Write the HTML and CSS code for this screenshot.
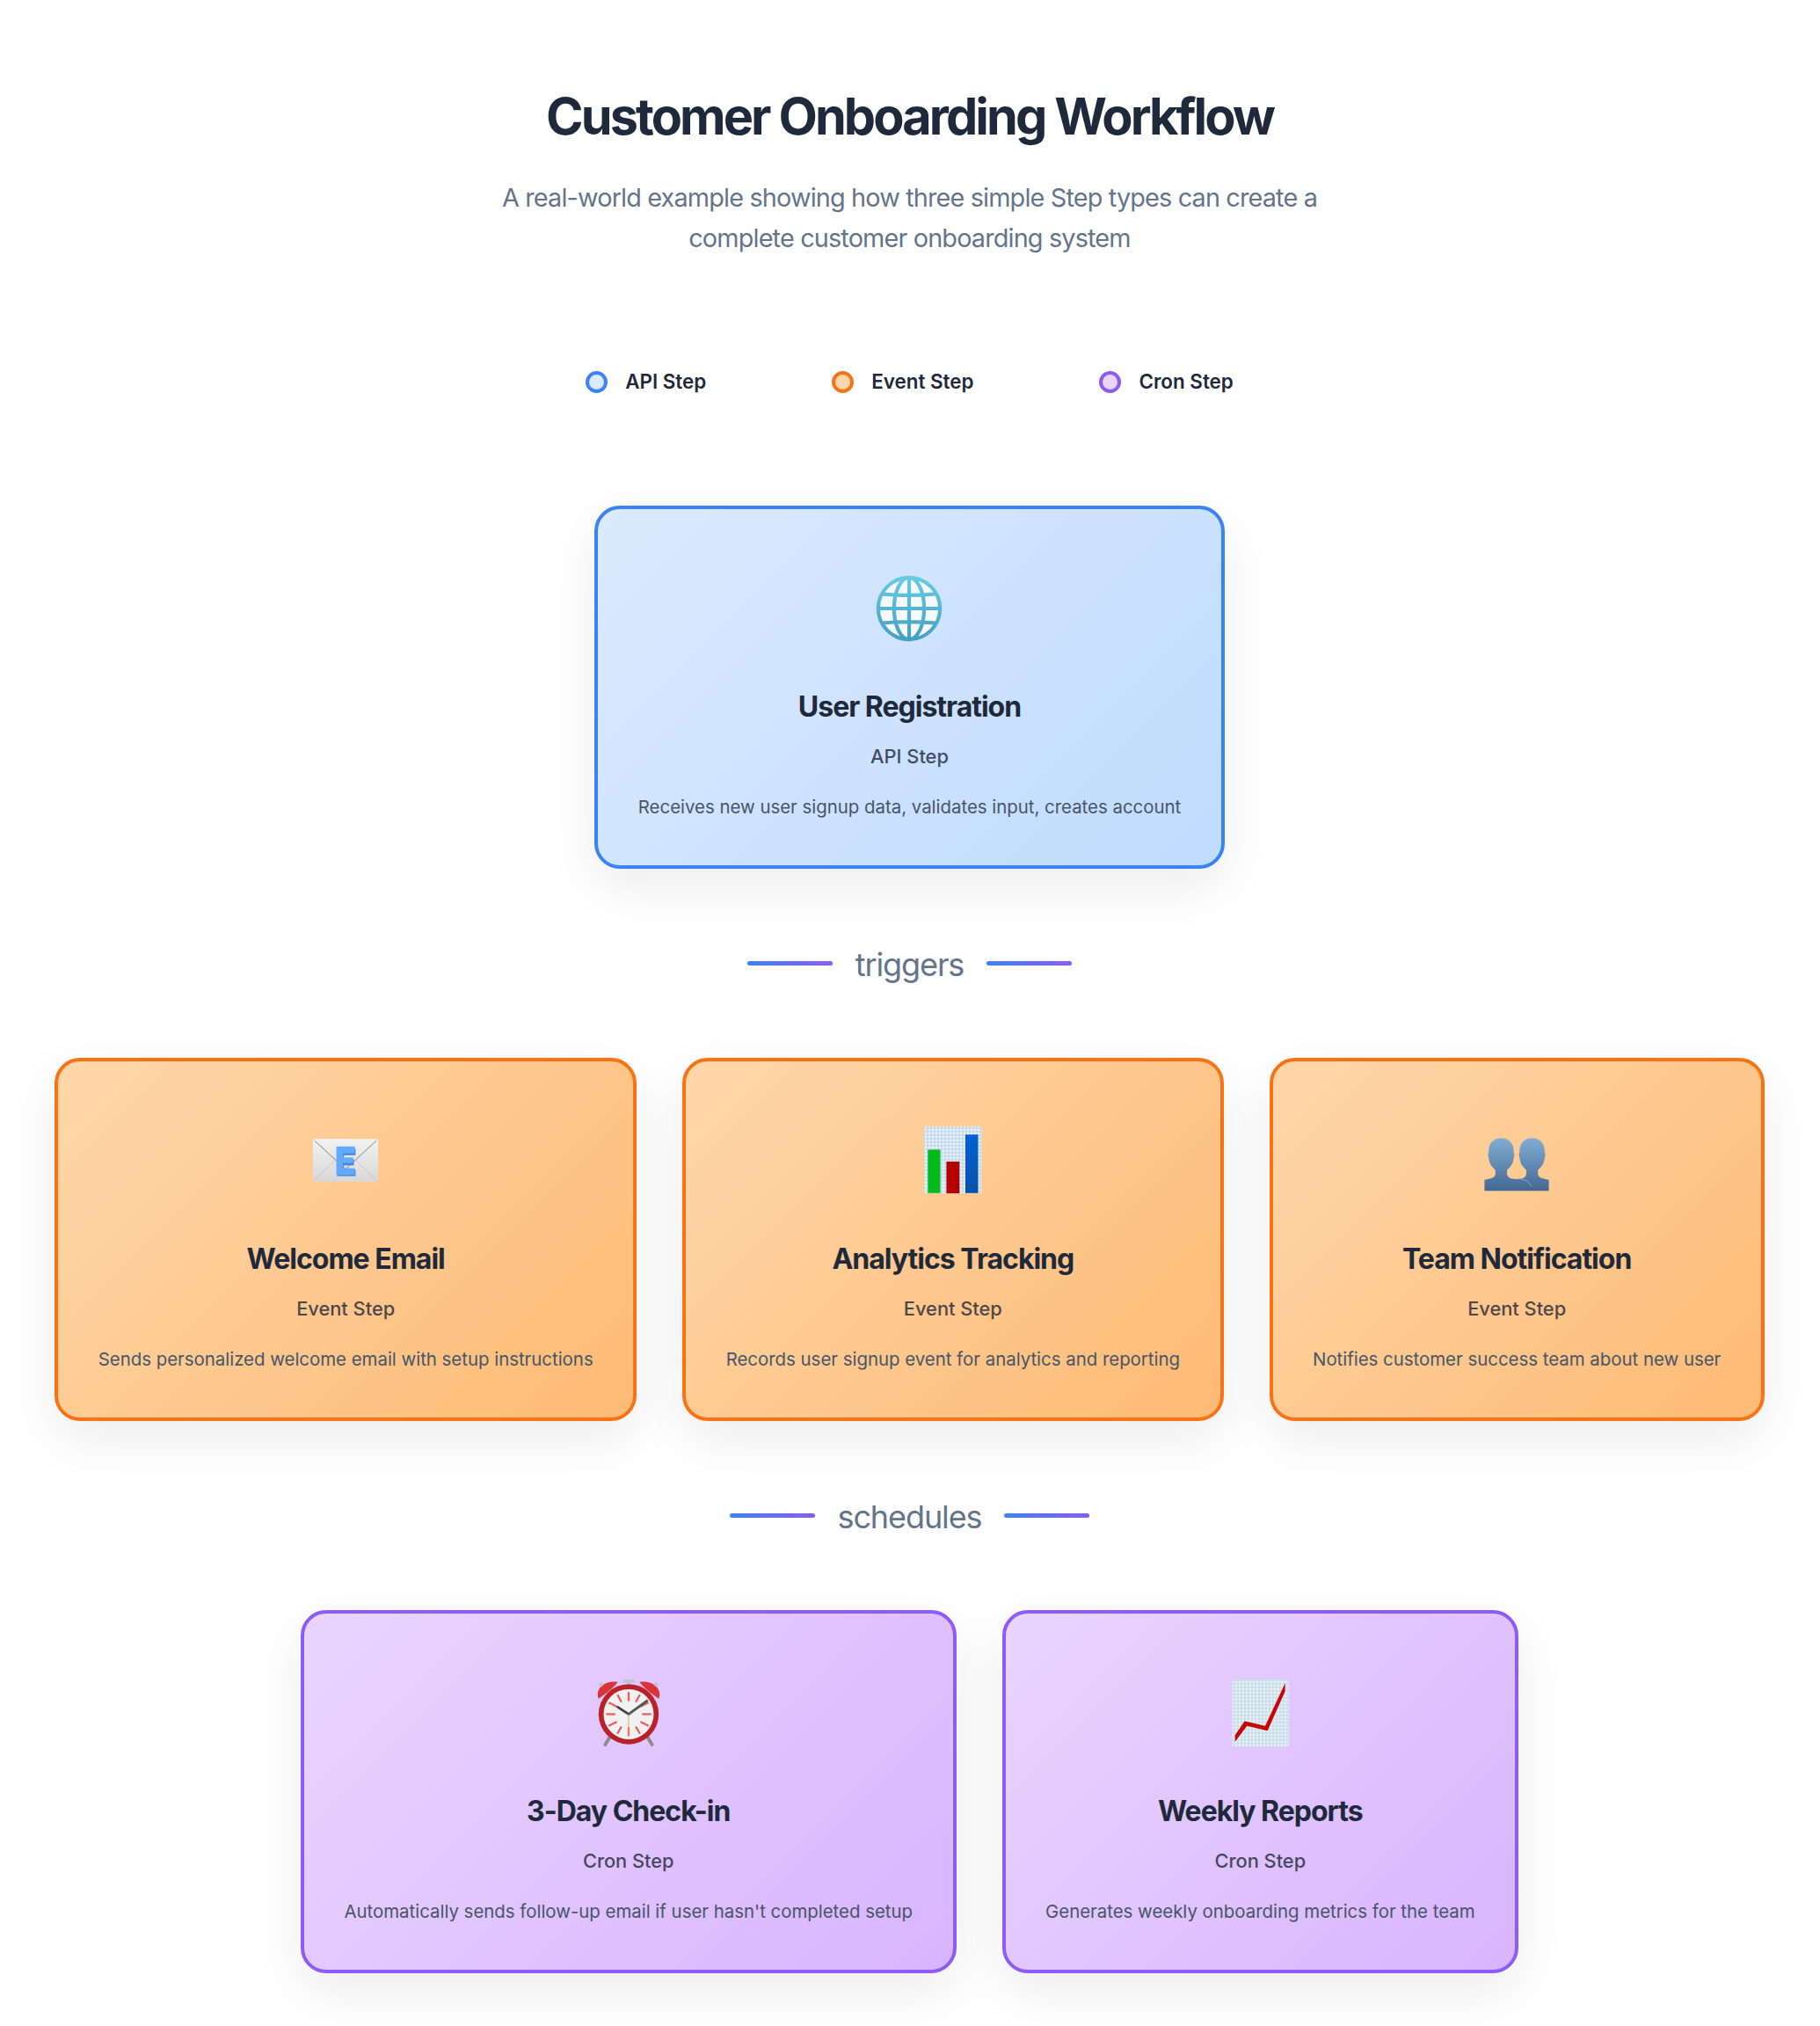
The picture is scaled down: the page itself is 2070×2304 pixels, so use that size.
FILE: index.html
```html
<!DOCTYPE html>
<html lang="en">
<head>
<meta charset="utf-8">
<title>Customer Onboarding Workflow</title>
<link rel="stylesheet" href="styles.css">
</head>
<body>
<main class="page">
  <header class="header">
    <h1 class="title">Customer Onboarding Workflow</h1>
    <p class="subtitle">A real-world example showing how three simple Step types can create a complete customer onboarding system</p>
  </header>
  <div class="legend">
    <div class="legend-item"><span class="dot dot-api"></span><span>API Step</span></div>
    <div class="legend-item"><span class="dot dot-event"></span><span>Event Step</span></div>
    <div class="legend-item"><span class="dot dot-cron"></span><span>Cron Step</span></div>
  </div>
  <section class="row">
    <article class="card card-api">
      <svg class="icon" viewBox="0 0 80 80"><defs><linearGradient id="gb" x1="0" y1="0" x2="0" y2="1"><stop offset="0" stop-color="#66cbe4"/><stop offset="1" stop-color="#469fc2"/></linearGradient></defs><circle cx="40" cy="40" r="37" fill="#f5f9fd"/><g fill="none" stroke="url(#gb)" stroke-width="4.4"><circle cx="40" cy="40" r="37"/><ellipse cx="40" cy="40" rx="18" ry="37"/><path d="M40 3v74M3 40h74M7.4 22.5c20 2 45 2 65.2 0M7.4 57.5c20-2 45-2 65.2 0"/></g></svg>
      <h3 class="name">User Registration</h3>
      <div class="kind">API Step</div>
      <p class="desc">Receives new user signup data, validates input, creates account</p>
    </article>
  </section>
  <div class="connector"><span class="line"></span><span class="connector-label">triggers</span><span class="line"></span></div>
  <section class="row">
    <article class="card card-event">
      <svg class="icon" viewBox="0 0 80 80"><defs><linearGradient id="ge" x1="0" y1="0" x2="0" y2="1"><stop offset="0" stop-color="#f2f2f2"/><stop offset="1" stop-color="#d8d8d8"/></linearGradient></defs><rect x="1" y="14" width="78" height="51" rx="2" fill="url(#ge)"/><path d="M3 16l37 34 37-34" fill="none" stroke="#a3a3a3" stroke-width="1.2"/><path d="M3 63l25-24M77 63L52 39" fill="none" stroke="#c4c4c4" stroke-width="1"/><path d="M30 24h22v8H38v5h12v7H38v5h14v8H30z" fill="#3f86d8" transform="translate(0 1.5)"/><path d="M29 23h22v8H37v5h12v7H37v6h14v8H29z" fill="#62aafc"/></svg>
      <h3 class="name">Welcome Email</h3>
      <div class="kind">Event Step</div>
      <p class="desc">Sends personalized welcome email with setup instructions</p>
    </article>
    <article class="card card-event">
      <svg class="icon" viewBox="0 0 80 80"><defs><pattern id="pa" width="4.2" height="4.2" patternUnits="userSpaceOnUse"><rect width="4.2" height="4.2" fill="#eff4fa"/><path d="M0 1h4.2M1 0v4.2" stroke="#bcd6ec" stroke-width="1.4"/></pattern><linearGradient id="gbar" x1="0" y1="0" x2="0" y2="1"><stop offset="0" stop-color="#0560d4"/><stop offset="1" stop-color="#0652a8"/></linearGradient></defs><rect x="5.5" y="-1" width="68.5" height="80" fill="url(#pa)"/><rect x="9.8" y="26.7" width="15" height="52" fill="#04bb1e"/><rect x="32" y="41" width="15.7" height="38" fill="#b40000"/><rect x="54.7" y="8.7" width="15.3" height="70" fill="url(#gbar)"/></svg>
      <h3 class="name">Analytics Tracking</h3>
      <div class="kind">Event Step</div>
      <p class="desc">Records user signup event for analytics and reporting</p>
    </article>
    <article class="card card-event">
      <svg class="icon" viewBox="0 0 80 80"><defs><linearGradient id="gp" x1="0" y1="0" x2="0" y2="1"><stop offset="0" stop-color="#82aed3"/><stop offset="1" stop-color="#436893"/></linearGradient></defs><path d="M1.5 76V63C8 61 14 61 14.500 56V51C10 47 7 43 6.500 36C5.500 35 5.500 31 6.500 30C6 20 12 13 21.500 13C31 13 37 20 36.500 30C37.500 31 37.500 35 36.500 36C36 43 33 47 28.500 51V56C29 60 33 62 40 62C47 62 51 60 51.500 56V51C47 47 44 43 43.500 36C42.500 35 42.500 31 43.500 30C43 20 49 13 58.500 13C68 13 74 20 73.500 30C74.500 31 74.500 35 73.500 36C73 43 70 47 65.500 51V56C66 61 72 61 78.500 63V76z" fill="url(#gp)"/><path d="M44 62c6 0 11 3 14 9" fill="none" stroke="#86b0d2" stroke-width="1"/></svg>
      <h3 class="name">Team Notification</h3>
      <div class="kind">Event Step</div>
      <p class="desc">Notifies customer success team about new user</p>
    </article>
  </section>
  <div class="connector"><span class="line"></span><span class="connector-label">schedules</span><span class="line"></span></div>
  <section class="row">
    <article class="card card-cron">
      <svg class="icon" viewBox="0 0 80 80"><path d="M18 68l-6 10M62 68l6 10" stroke="#8b8b8b" stroke-width="4" stroke-linecap="round"/><path d="M33 2h14M40 2v8" stroke="#b9c4cc" stroke-width="3.5"/><path d="M4 23C-1 11 12 0 27 3 22 10 13 17 4 23z" fill="#d8343a"/><path d="M76 23C81 11 68 0 53 3 58 10 67 17 76 23z" fill="#d8343a"/><circle cx="7" cy="6" r="2.4" fill="#b9c4cc"/><circle cx="73" cy="6" r="2.4" fill="#b9c4cc"/><circle cx="40" cy="41.5" r="36" fill="#bb2228"/><circle cx="40" cy="41.5" r="30" fill="#f1f1f1"/><g stroke="#ef5a5e" stroke-width="2.4" stroke-linecap="round"><path d="M40 16v9M40 58v9M14 41.500h9M57 41.500h9M27 19l4 7M53 19l-4 7M27 64l4-7M53 64l-4-7M17 28l8 4M63 28l-8 4M17 55l8-4M63 55l-8-4"/></g><path d="M40 41.500L27 33" stroke="#444" stroke-width="3" stroke-linecap="round"/><path d="M40 41.500l22-16" stroke="#555" stroke-width="3" stroke-linecap="round"/><path d="M40 41.500v26" stroke="#d6a850" stroke-width="1"/></svg>
      <h3 class="name">3-Day Check-in</h3>
      <div class="kind">Cron Step</div>
      <p class="desc">Automatically sends follow-up email if user hasn't completed setup</p>
    </article>
    <article class="card card-cron">
      <svg class="icon" viewBox="0 0 80 80"><defs><pattern id="pb" width="4.2" height="4.2" patternUnits="userSpaceOnUse"><rect width="4.2" height="4.2" fill="#eef4f8"/><path d="M0 1h4.2M1 0v4.2" stroke="#c2dbea" stroke-width="1.4"/></pattern></defs><rect x="7" y="0" width="67.500" height="80" fill="url(#pb)"/><path d="M10.200 74.400V66.700L21.700 49.800 46.300 55.500 70.200 4.200V14L49.100 61.400 24.500 55.500z" fill="#c80404"/></svg>
      <h3 class="name">Weekly Reports</h3>
      <div class="kind">Cron Step</div>
      <p class="desc">Generates weekly onboarding metrics for the team</p>
    </article>
  </section>
</main>
</body>
</html>
```
FILE: styles.css
```css
* { box-sizing: border-box; }
html, body { margin: 0; padding: 0; }
body {
  background: #fff;
  color: #1e293b;
  font-family: Inter, "Liberation Sans", sans-serif;
}
.page {
  display: flex;
  flex-direction: column;
  align-items: center;
  height: 2304px;
  padding-top: 96px;
  padding-right: 1px;
}
.header { text-align: center; }
.title {
  margin: 0;
  font-size: 57.6px;
  line-height: 72px;
  font-weight: 700;
  letter-spacing: -2.9px;
  color: #1e293b;
}
.subtitle {
  width: 960px;
  margin: 34px 0 0;
  font-size: 28.8px;
  line-height: 46px;
  letter-spacing: -0.83px;
  color: #64748b;
}
.legend {
  display: flex;
  gap: 143px;
  margin-top: 124px;
}
.legend-item {
  display: flex;
  align-items: center;
  gap: 20px;
  font-size: 22.4px;
  line-height: 32px;
  font-weight: 600;
  color: #1e293b;
}
.dot {
  width: 25px;
  height: 25px;
  border-radius: 50%;
  border: 4px solid;
}
.dot-api { background: #dbeafe; border-color: #3b82f6; }
.dot-event { background: #fed7aa; border-color: #f97316; }
.dot-cron { background: #e9d5ff; border-color: #8b5cf6; }
.row {
  display: flex;
  justify-content: center;
  gap: 52px;
  margin-top: 125px;
}
.connector + .row { margin-top: 72px; }
.connector {
  display: flex;
  align-items: center;
  gap: 26px;
  height: 72px;
  margin-top: 71px;
  font-size: 36px;
  color: #64748b;
}
.connector-label { padding-top: 3px; letter-spacing: -1.1px; }
.line {
  width: 97px;
  height: 5px;
  border-radius: 3px;
  background: linear-gradient(90deg, #3b82f6, #8b5cf6);
}
.card {
  display: flex;
  flex-direction: column;
  align-items: center;
  height: 413px;
  padding: 74.5px 45.5px 0;
  border: 4px solid;
  border-radius: 29px;
  text-align: center;
  box-shadow: 0 20px 60px rgba(0, 0, 0, 0.08);
}
.card-api { background: linear-gradient(135deg, #dbeafe, #bfdbfe); border-color: #3b82f6; }
.card-event { background: linear-gradient(135deg, #fed7aa, #fdba74); border-color: #f97316; }
.card-cron { background: linear-gradient(135deg, #e9d5ff, #d8b4fe); border-color: #8b5cf6; }
.icon { width: 76px; height: 76px; flex: none; overflow: visible; }
.name {
  margin: 52px 0 0;
  font-size: 32px;
  line-height: 44px;
  font-weight: 700;
  letter-spacing: -1px;
  color: #1e293b;
}
.kind {
  margin-top: 18px;
  font-size: 21.8px;
  line-height: 32px;
  font-weight: 500;
  color: #1e293b;
  opacity: 0.8;
}
.desc {
  margin: 26.5px 0 0;
  font-size: 20.4px;
  line-height: 32px;
  color: #475569;
  white-space: nowrap;
}
```
